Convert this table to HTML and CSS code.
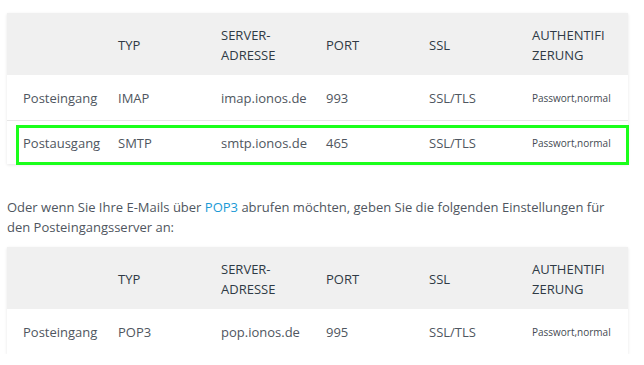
FILE: index.html
```html
<!DOCTYPE html>
<html lang="de">
<head>
<meta charset="utf-8">
<link rel="stylesheet" href="styles.css">
</head>
<body>
<div class="page">
  <div class="table-wrap">
    <table class="mail-table">
      <colgroup>
        <col class="c1"><col class="c2"><col class="c3"><col class="c4"><col class="c5"><col class="c6">
      </colgroup>
      <thead>
        <tr><th></th><th>TYP</th><th>SERVER-ADRESSE</th><th>PORT</th><th>SSL</th><th>AUTHENTIFIZERUNG</th></tr>
      </thead>
      <tbody>
        <tr><td>Posteingang</td><td>IMAP</td><td>imap.ionos.de</td><td>993</td><td>SSL/TLS</td><td class="small">Passwort,normal</td></tr>
        <tr><td>Postausgang</td><td>SMTP</td><td>smtp.ionos.de</td><td>465</td><td>SSL/TLS</td><td class="small">Passwort,normal</td></tr>
      </tbody>
    </table>
    <div class="highlight"></div>
  </div>
  <p class="intro">Oder wenn Sie Ihre E-Mails über <a href="#">POP3</a> abrufen möchten, geben Sie die folgenden Einstellungen für den Posteingangsserver an:</p>
  <div class="table-wrap">
    <table class="mail-table">
      <colgroup>
        <col class="c1"><col class="c2"><col class="c3"><col class="c4"><col class="c5"><col class="c6">
      </colgroup>
      <thead>
        <tr><th></th><th>TYP</th><th>SERVER-ADRESSE</th><th>PORT</th><th>SSL</th><th>AUTHENTIFIZERUNG</th></tr>
      </thead>
      <tbody>
        <tr><td>Posteingang</td><td>POP3</td><td>pop.ionos.de</td><td>995</td><td>SSL/TLS</td><td class="small">Passwort,normal</td></tr>
      </tbody>
    </table>
  </div>
</div>
</body>
</html>
```
FILE: styles.css
```css
html, body {
  margin: 0;
  padding: 0;
  background: #ffffff;
}
body {
  font-family: "Open Sans", "Liberation Sans", sans-serif;
  font-size: 13px;
  color: #4f5660;
}
.page {
  width: 621px;
  padding: 13px 0 0 7px;
}
.table-wrap {
  position: relative;
}
.mail-table {
  width: 621px;
  table-layout: fixed;
  border-collapse: collapse;
  box-shadow: 0 1px 3px rgba(0, 0, 0, 0.10);
}
.c1 { width: 95px; }
.c2 { width: 103px; }
.c3 { width: 105px; }
.c4 { width: 103px; }
.c5 { width: 103px; }
.c6 { width: 112px; }
.mail-table th {
  background: #f0f0f0;
  color: #2f3a45;
  font-weight: normal;
  text-align: left;
  line-height: 20px;
  height: 62px;
  padding: 1px 16px 0 16px;
  vertical-align: middle;
  overflow-wrap: anywhere;
  box-sizing: border-box;
}
.mail-table td {
  height: 44px;
  padding: 1px 16px 0 16px;
  line-height: 20px;
  vertical-align: middle;
  border-top: 1px solid #e6e6e6;
  box-sizing: border-box;
  white-space: nowrap;
}
.mail-table tbody tr:first-child td {
  border-top: none;
  height: 45px;
}
.mail-table td.small {
  font-size: 10px;
  color: #444a52;
}
.highlight {
  position: absolute;
  left: 9px;
  top: 112px;
  width: 613px;
  height: 40px;
  border: 3px solid #1aff1a;
  box-sizing: border-box;
}
.intro {
  margin: 33px 0 10px 0;
  line-height: 20px;
}
.intro a {
  color: #1a9ad6;
  text-decoration: none;
}
```
